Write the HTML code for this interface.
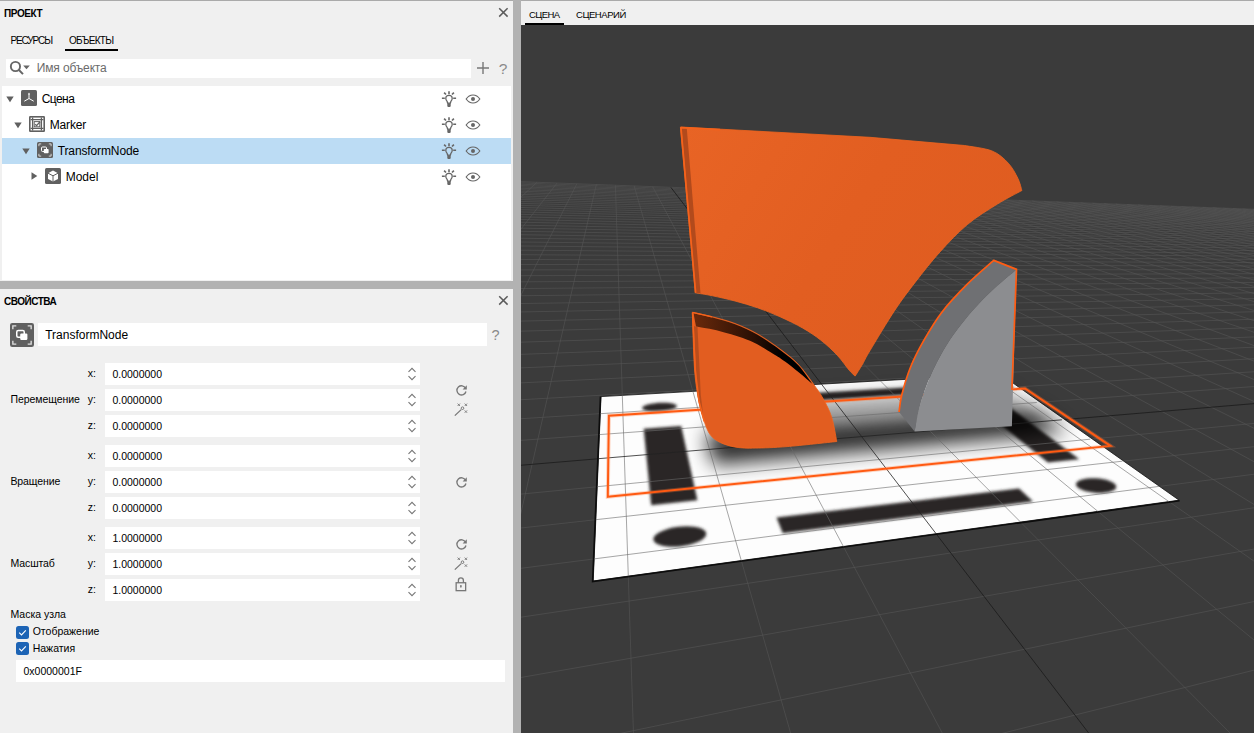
<!DOCTYPE html>
<html><head><meta charset="utf-8"><style>
html,body{margin:0;padding:0;}
body{width:1254px;height:733px;position:relative;overflow:hidden;background:#f0f0f0;font-family:"Liberation Sans",sans-serif;}
.t{position:absolute;white-space:nowrap;}
.r{position:absolute;display:block;}
</style></head><body>
<div class="r" style="left:0px;top:0px;width:513px;height:733px;background:#f0f0f0;"></div><div class="r" style="left:513px;top:0px;width:8px;height:733px;background:#b2b2b2;"></div><div class="r" style="left:0px;top:0px;width:513px;height:1px;background:#aaaaaa;"></div><div class="r" style="left:521px;top:0px;width:733px;height:1px;background:#aaaaaa;"></div><div class="r" style="left:0px;top:281px;width:513px;height:8px;background:#b2b2b2;"></div><div class="t" style="left:4.00px;top:8.54px;font-size:10px;line-height:10px;color:#000;font-weight:bold;letter-spacing:-0.4px;">ПРОЕКТ</div><svg class="r" style="left:498px;top:7px;" width="11" height="11" viewBox="0 0 11 11"><path d="M1.2 1.2L9.6 9.6M9.6 1.2L1.2 9.6" stroke="#5c5c5c" stroke-width="1.5" fill="none"/></svg><div class="t" style="left:10.40px;top:35.73px;font-size:10px;line-height:10px;color:#000;font-weight:normal;letter-spacing:-1.1px;">РЕСУРСЫ</div><div class="t" style="left:68.90px;top:35.73px;font-size:10px;line-height:10px;color:#000;font-weight:normal;letter-spacing:-0.7px;">ОБЪЕКТЫ</div><div class="r" style="left:65px;top:49px;width:53px;height:2px;background:#000;"></div><div class="r" style="left:6px;top:59px;width:465px;height:19px;background:#fff;"></div><svg class="r" style="left:9px;top:60px;" width="22" height="16" viewBox="0 0 22 16"><circle cx="6.45" cy="6.5" r="4.6" stroke="#666" stroke-width="1.9" fill="none"/><path d="M9.7 9.8L14 14.1" stroke="#666" stroke-width="2"/><path d="M14.2 5.6h6.6l-3.3 3.7z" fill="#666"/></svg><div class="t" style="left:36.80px;top:62.24px;font-size:12px;line-height:12px;color:#6b6b6b;font-weight:normal;letter-spacing:-0.15px;">Имя объекта</div><svg class="r" style="left:476px;top:61px;" width="14" height="14" viewBox="0 0 14 14"><path d="M7 1V13M1 7H13" stroke="#777" stroke-width="1.4"/></svg><div class="t" style="left:498.80px;top:60.98px;font-size:15.5px;line-height:15.5px;color:#8a8a8a;font-weight:normal;letter-spacing:0px;">?</div><div class="r" style="left:2px;top:86px;width:509px;height:194px;background:#fff;"></div><div class="r" style="left:2px;top:138px;width:509px;height:26px;background:#bcdcf4;"></div><svg class="r" style="left:6px;top:96px;" width="8" height="7" viewBox="0 0 8 7"><path d="M0.3 0.5H7.7L4 6.3Z" fill="#606060"/></svg><svg class="r" style="left:21px;top:90px;" width="16" height="16" viewBox="0 0 16 16"><rect x="0" y="0" width="16" height="16" rx="1.5" fill="#606060"/><path d="M8 3.5V8.5M8 8.5L3.3 11.2M8 8.5L12.7 11.2" stroke="#fff" stroke-width="1" fill="none"/><path d="M8 2.6l1 1.8h-2z" fill="#fff"/></svg><div class="t" style="left:41.70px;top:92.54px;font-size:12px;line-height:12px;color:#000;font-weight:normal;letter-spacing:-0.55px;">Сцена</div><svg class="r" style="left:441px;top:90px;" width="16" height="18" viewBox="0 0 16 18"><path d="M8 1.2V4.3M3.1 2.6L5 4.5M12.9 2.6L11 4.5M0.9 8.2H3.8M12.2 8.2H15.1" stroke="#666" stroke-width="1.6"/><path d="M8 5.3c-1.9 0-3.2 1.4-3.2 3.1 0 1.2.6 2 1.3 2.9l.5 1.8h2.8l.5-1.8c.7-.9 1.3-1.7 1.3-2.9 0-1.7-1.3-3.1-3.2-3.1z" fill="none" stroke="#666" stroke-width="1.3"/><path d="M6.3 13.3h3.4v2.6c0 .7-.7 1.2-1.7 1.2s-1.7-.5-1.7-1.2z" fill="#666"/></svg><svg class="r" style="left:465px;top:94px;" width="16" height="10" viewBox="0 0 16 10"><path d="M1.2 5C3 2.3 5.3 1 8 1s5 1.3 6.8 4c-1.8 2.7-4.1 4-6.8 4S3 7.7 1.2 5z" fill="none" stroke="#666" stroke-width="1.2"/><circle cx="8" cy="5" r="2" fill="#666"/></svg><svg class="r" style="left:14px;top:122px;" width="8" height="7" viewBox="0 0 8 7"><path d="M0.3 0.5H7.7L4 6.3Z" fill="#606060"/></svg><svg class="r" style="left:29px;top:116px;" width="16" height="16" viewBox="0 0 16 16"><rect x="0" y="0" width="16" height="16" rx="1.2" fill="#606060"/><rect x="1.6" y="1.6" width="12.8" height="12.8" fill="#fff"/><path d="M1.6 3.6H14.4M1.6 12.4H14.4M3.6 1.6V14.4M12.4 1.6V14.4" stroke="#606060" stroke-width="1.3"/><rect x="5.2" y="5.6" width="5.6" height="5.2" fill="none" stroke="#606060" stroke-width="1"/><path d="M6.2 8.2l1.4 1.4 3.4-3.8" stroke="#606060" stroke-width="1.3" fill="none"/></svg><div class="t" style="left:49.70px;top:118.54px;font-size:12px;line-height:12px;color:#000;font-weight:normal;letter-spacing:-0.15px;">Marker</div><svg class="r" style="left:441px;top:116px;" width="16" height="18" viewBox="0 0 16 18"><path d="M8 1.2V4.3M3.1 2.6L5 4.5M12.9 2.6L11 4.5M0.9 8.2H3.8M12.2 8.2H15.1" stroke="#666" stroke-width="1.6"/><path d="M8 5.3c-1.9 0-3.2 1.4-3.2 3.1 0 1.2.6 2 1.3 2.9l.5 1.8h2.8l.5-1.8c.7-.9 1.3-1.7 1.3-2.9 0-1.7-1.3-3.1-3.2-3.1z" fill="none" stroke="#666" stroke-width="1.3"/><path d="M6.3 13.3h3.4v2.6c0 .7-.7 1.2-1.7 1.2s-1.7-.5-1.7-1.2z" fill="#666"/></svg><svg class="r" style="left:465px;top:120px;" width="16" height="10" viewBox="0 0 16 10"><path d="M1.2 5C3 2.3 5.3 1 8 1s5 1.3 6.8 4c-1.8 2.7-4.1 4-6.8 4S3 7.7 1.2 5z" fill="none" stroke="#666" stroke-width="1.2"/><circle cx="8" cy="5" r="2" fill="#666"/></svg><svg class="r" style="left:22px;top:148px;" width="8" height="7" viewBox="0 0 8 7"><path d="M0.3 0.5H7.7L4 6.3Z" fill="#606060"/></svg><svg class="r" style="left:37px;top:142px;" width="16" height="16" viewBox="0 0 16 16"><rect x="0" y="0" width="16" height="16" rx="1.5" fill="#606060"/><path d="M1.9 4.2V1.9H4.2M11.8 1.9H14.1V4.2M14.1 11.8V14.1H11.8M4.2 14.1H1.9V11.8" stroke="#fff" stroke-width="0.9" fill="none" opacity="0.8"/><rect x="4.5" y="5" width="5" height="4.5" rx="1" fill="none" stroke="#fff" stroke-width="1"/><rect x="6.8" y="7" width="4.8" height="4.3" rx="0.8" fill="#fff"/></svg><div class="t" style="left:57.70px;top:144.54px;font-size:12px;line-height:12px;color:#000;font-weight:normal;letter-spacing:-0.12px;">TransformNode</div><svg class="r" style="left:441px;top:142px;" width="16" height="18" viewBox="0 0 16 18"><path d="M8 1.2V4.3M3.1 2.6L5 4.5M12.9 2.6L11 4.5M0.9 8.2H3.8M12.2 8.2H15.1" stroke="#666" stroke-width="1.6"/><path d="M8 5.3c-1.9 0-3.2 1.4-3.2 3.1 0 1.2.6 2 1.3 2.9l.5 1.8h2.8l.5-1.8c.7-.9 1.3-1.7 1.3-2.9 0-1.7-1.3-3.1-3.2-3.1z" fill="none" stroke="#666" stroke-width="1.3"/><path d="M6.3 13.3h3.4v2.6c0 .7-.7 1.2-1.7 1.2s-1.7-.5-1.7-1.2z" fill="#666"/></svg><svg class="r" style="left:465px;top:146px;" width="16" height="10" viewBox="0 0 16 10"><path d="M1.2 5C3 2.3 5.3 1 8 1s5 1.3 6.8 4c-1.8 2.7-4.1 4-6.8 4S3 7.7 1.2 5z" fill="none" stroke="#666" stroke-width="1.2"/><circle cx="8" cy="5" r="2" fill="#666"/></svg><svg class="r" style="left:30.5px;top:172px;" width="7" height="8" viewBox="0 0 7 8"><path d="M0.5 0.3V7.7L6.3 4Z" fill="#606060"/></svg><svg class="r" style="left:45px;top:168px;" width="16" height="16" viewBox="0 0 16 16"><rect x="0" y="0" width="16" height="16" rx="1.5" fill="#606060"/><path d="M8 2.6L13 5.2V11L8 13.6L3 11V5.2Z" fill="#fff"/><path d="M3 5.2L8 7.8L13 5.2M8 7.8V13.6" stroke="#606060" stroke-width="1" fill="none"/></svg><div class="t" style="left:65.70px;top:170.54px;font-size:12px;line-height:12px;color:#000;font-weight:normal;letter-spacing:0px;">Model</div><svg class="r" style="left:441px;top:168px;" width="16" height="18" viewBox="0 0 16 18"><path d="M8 1.2V4.3M3.1 2.6L5 4.5M12.9 2.6L11 4.5M0.9 8.2H3.8M12.2 8.2H15.1" stroke="#666" stroke-width="1.6"/><path d="M8 5.3c-1.9 0-3.2 1.4-3.2 3.1 0 1.2.6 2 1.3 2.9l.5 1.8h2.8l.5-1.8c.7-.9 1.3-1.7 1.3-2.9 0-1.7-1.3-3.1-3.2-3.1z" fill="none" stroke="#666" stroke-width="1.3"/><path d="M6.3 13.3h3.4v2.6c0 .7-.7 1.2-1.7 1.2s-1.7-.5-1.7-1.2z" fill="#666"/></svg><svg class="r" style="left:465px;top:172px;" width="16" height="10" viewBox="0 0 16 10"><path d="M1.2 5C3 2.3 5.3 1 8 1s5 1.3 6.8 4c-1.8 2.7-4.1 4-6.8 4S3 7.7 1.2 5z" fill="none" stroke="#666" stroke-width="1.2"/><circle cx="8" cy="5" r="2" fill="#666"/></svg><div class="t" style="left:4.00px;top:296.64px;font-size:10px;line-height:10px;color:#000;font-weight:bold;letter-spacing:-0.5px;">СВОЙСТВА</div><svg class="r" style="left:498px;top:295px;" width="11" height="11" viewBox="0 0 11 11"><path d="M1.2 1.2L9.6 9.6M9.6 1.2L1.2 9.6" stroke="#5c5c5c" stroke-width="1.5" fill="none"/></svg><svg class="r" style="left:10px;top:323px;" width="24" height="24" viewBox="0 0 24 24"><g transform="scale(1.5)"><rect x="0" y="0" width="16" height="16" rx="1.5" fill="#606060"/><path d="M1.9 4.2V1.9H4.2M11.8 1.9H14.1V4.2M14.1 11.8V14.1H11.8M4.2 14.1H1.9V11.8" stroke="#fff" stroke-width="0.9" fill="none" opacity="0.8"/><rect x="4.5" y="5" width="5" height="4.5" rx="1" fill="none" stroke="#fff" stroke-width="1"/><rect x="6.8" y="7" width="4.8" height="4.3" rx="0.8" fill="#fff"/></g></svg><div class="r" style="left:38px;top:323px;width:449px;height:23px;background:#fff;"></div><div class="t" style="left:45.20px;top:328.94px;font-size:12px;line-height:12px;color:#000;font-weight:normal;letter-spacing:0px;">TransformNode</div><div class="t" style="left:491.50px;top:328.33px;font-size:14.5px;line-height:14.5px;color:#8a8a8a;font-weight:normal;letter-spacing:0px;">?</div><div class="r" style="left:105px;top:363px;width:315px;height:22px;background:#fff;"></div><div class="t" style="left:87.70px;top:368.41px;font-size:10.5px;line-height:10.5px;color:#000;font-weight:normal;letter-spacing:0px;">x:</div><div class="t" style="left:112.40px;top:368.61px;font-size:10.5px;line-height:10.5px;color:#000;font-weight:normal;letter-spacing:0px;">0.0000000</div><svg class="r" style="left:407px;top:366px;" width="10" height="16" viewBox="0 0 10 16"><path d="M1.5 5.8L5 2.3L8.5 5.8M1.5 10.2L5 13.7L8.5 10.2" stroke="#777" stroke-width="1.1" fill="none"/></svg><div class="r" style="left:105px;top:389px;width:315px;height:22px;background:#fff;"></div><div class="t" style="left:87.70px;top:394.41px;font-size:10.5px;line-height:10.5px;color:#000;font-weight:normal;letter-spacing:0px;">y:</div><div class="t" style="left:112.40px;top:394.61px;font-size:10.5px;line-height:10.5px;color:#000;font-weight:normal;letter-spacing:0px;">0.0000000</div><svg class="r" style="left:407px;top:392px;" width="10" height="16" viewBox="0 0 10 16"><path d="M1.5 5.8L5 2.3L8.5 5.8M1.5 10.2L5 13.7L8.5 10.2" stroke="#777" stroke-width="1.1" fill="none"/></svg><div class="r" style="left:105px;top:415px;width:315px;height:22px;background:#fff;"></div><div class="t" style="left:87.70px;top:420.41px;font-size:10.5px;line-height:10.5px;color:#000;font-weight:normal;letter-spacing:0px;">z:</div><div class="t" style="left:112.40px;top:420.61px;font-size:10.5px;line-height:10.5px;color:#000;font-weight:normal;letter-spacing:0px;">0.0000000</div><svg class="r" style="left:407px;top:418px;" width="10" height="16" viewBox="0 0 10 16"><path d="M1.5 5.8L5 2.3L8.5 5.8M1.5 10.2L5 13.7L8.5 10.2" stroke="#777" stroke-width="1.1" fill="none"/></svg><div class="r" style="left:105px;top:445px;width:315px;height:22px;background:#fff;"></div><div class="t" style="left:87.70px;top:450.41px;font-size:10.5px;line-height:10.5px;color:#000;font-weight:normal;letter-spacing:0px;">x:</div><div class="t" style="left:112.40px;top:450.61px;font-size:10.5px;line-height:10.5px;color:#000;font-weight:normal;letter-spacing:0px;">0.0000000</div><svg class="r" style="left:407px;top:448px;" width="10" height="16" viewBox="0 0 10 16"><path d="M1.5 5.8L5 2.3L8.5 5.8M1.5 10.2L5 13.7L8.5 10.2" stroke="#777" stroke-width="1.1" fill="none"/></svg><div class="r" style="left:105px;top:471px;width:315px;height:22px;background:#fff;"></div><div class="t" style="left:87.70px;top:476.41px;font-size:10.5px;line-height:10.5px;color:#000;font-weight:normal;letter-spacing:0px;">y:</div><div class="t" style="left:112.40px;top:476.61px;font-size:10.5px;line-height:10.5px;color:#000;font-weight:normal;letter-spacing:0px;">0.0000000</div><svg class="r" style="left:407px;top:474px;" width="10" height="16" viewBox="0 0 10 16"><path d="M1.5 5.8L5 2.3L8.5 5.8M1.5 10.2L5 13.7L8.5 10.2" stroke="#777" stroke-width="1.1" fill="none"/></svg><div class="r" style="left:105px;top:497px;width:315px;height:22px;background:#fff;"></div><div class="t" style="left:87.70px;top:502.41px;font-size:10.5px;line-height:10.5px;color:#000;font-weight:normal;letter-spacing:0px;">z:</div><div class="t" style="left:112.40px;top:502.61px;font-size:10.5px;line-height:10.5px;color:#000;font-weight:normal;letter-spacing:0px;">0.0000000</div><svg class="r" style="left:407px;top:500px;" width="10" height="16" viewBox="0 0 10 16"><path d="M1.5 5.8L5 2.3L8.5 5.8M1.5 10.2L5 13.7L8.5 10.2" stroke="#777" stroke-width="1.1" fill="none"/></svg><div class="r" style="left:105px;top:527px;width:315px;height:22px;background:#fff;"></div><div class="t" style="left:87.70px;top:532.41px;font-size:10.5px;line-height:10.5px;color:#000;font-weight:normal;letter-spacing:0px;">x:</div><div class="t" style="left:112.40px;top:532.61px;font-size:10.5px;line-height:10.5px;color:#000;font-weight:normal;letter-spacing:0px;">1.0000000</div><svg class="r" style="left:407px;top:530px;" width="10" height="16" viewBox="0 0 10 16"><path d="M1.5 5.8L5 2.3L8.5 5.8M1.5 10.2L5 13.7L8.5 10.2" stroke="#777" stroke-width="1.1" fill="none"/></svg><div class="r" style="left:105px;top:553px;width:315px;height:22px;background:#fff;"></div><div class="t" style="left:87.70px;top:558.41px;font-size:10.5px;line-height:10.5px;color:#000;font-weight:normal;letter-spacing:0px;">y:</div><div class="t" style="left:112.40px;top:558.61px;font-size:10.5px;line-height:10.5px;color:#000;font-weight:normal;letter-spacing:0px;">1.0000000</div><svg class="r" style="left:407px;top:556px;" width="10" height="16" viewBox="0 0 10 16"><path d="M1.5 5.8L5 2.3L8.5 5.8M1.5 10.2L5 13.7L8.5 10.2" stroke="#777" stroke-width="1.1" fill="none"/></svg><div class="r" style="left:105px;top:579px;width:315px;height:22px;background:#fff;"></div><div class="t" style="left:87.70px;top:584.41px;font-size:10.5px;line-height:10.5px;color:#000;font-weight:normal;letter-spacing:0px;">z:</div><div class="t" style="left:112.40px;top:584.61px;font-size:10.5px;line-height:10.5px;color:#000;font-weight:normal;letter-spacing:0px;">1.0000000</div><svg class="r" style="left:407px;top:582px;" width="10" height="16" viewBox="0 0 10 16"><path d="M1.5 5.8L5 2.3L8.5 5.8M1.5 10.2L5 13.7L8.5 10.2" stroke="#777" stroke-width="1.1" fill="none"/></svg><div class="t" style="left:10.40px;top:394.41px;font-size:10.5px;line-height:10.5px;color:#000;font-weight:normal;letter-spacing:-0.05px;">Перемещение</div><div class="t" style="left:10.40px;top:476.41px;font-size:10.5px;line-height:10.5px;color:#000;font-weight:normal;letter-spacing:-0.1px;">Вращение</div><div class="t" style="left:10.50px;top:558.41px;font-size:10.5px;line-height:10.5px;color:#000;font-weight:normal;letter-spacing:-0.1px;">Масштаб</div><svg class="r" style="left:455px;top:384px;" width="13" height="13" viewBox="0 0 13 13"><path d="M10.6 4.2A4.6 4.6 0 1 0 11 7.5" stroke="#777" stroke-width="1.3" fill="none"/><path d="M11.8 1.2V5.4H7.6Z" fill="#777"/></svg><svg class="r" style="left:454px;top:403px;" width="14" height="14" viewBox="0 0 14 14"><path d="M0.8 12.6L7.2 6.6" stroke="#777" stroke-width="1.3"/><circle cx="8.5" cy="5.2" r="1.3" fill="none" stroke="#777" stroke-width="1"/><path d="M3.5999999999999996 0.6000000000000001l2.4 2.4M6.0 0.6000000000000001l-2.4 2.4M10.700000000000001 0.6000000000000001l2.4 2.4M13.1 0.6000000000000001l-2.4 2.4M10.700000000000001 7.3999999999999995l2.4 2.4M13.1 7.3999999999999995l-2.4 2.4" stroke="#777" stroke-width="0.9"/></svg><svg class="r" style="left:455px;top:476px;" width="13" height="13" viewBox="0 0 13 13"><path d="M10.6 4.2A4.6 4.6 0 1 0 11 7.5" stroke="#777" stroke-width="1.3" fill="none"/><path d="M11.8 1.2V5.4H7.6Z" fill="#777"/></svg><svg class="r" style="left:455px;top:538px;" width="13" height="13" viewBox="0 0 13 13"><path d="M10.6 4.2A4.6 4.6 0 1 0 11 7.5" stroke="#777" stroke-width="1.3" fill="none"/><path d="M11.8 1.2V5.4H7.6Z" fill="#777"/></svg><svg class="r" style="left:454px;top:557px;" width="14" height="14" viewBox="0 0 14 14"><path d="M0.8 12.6L7.2 6.6" stroke="#777" stroke-width="1.3"/><circle cx="8.5" cy="5.2" r="1.3" fill="none" stroke="#777" stroke-width="1"/><path d="M3.5999999999999996 0.6000000000000001l2.4 2.4M6.0 0.6000000000000001l-2.4 2.4M10.700000000000001 0.6000000000000001l2.4 2.4M13.1 0.6000000000000001l-2.4 2.4M10.700000000000001 7.3999999999999995l2.4 2.4M13.1 7.3999999999999995l-2.4 2.4" stroke="#777" stroke-width="0.9"/></svg><svg class="r" style="left:454px;top:577px;" width="14" height="15" viewBox="0 0 14 15"><path d="M4.4 5.8V3.4a2.5 2.5 0 0 1 5 0V5.8" stroke="#777" stroke-width="1.3" fill="none"/><rect x="2.15" y="5.75" width="9.5" height="7.9" fill="none" stroke="#777" stroke-width="1.3"/><circle cx="6.9" cy="9" r="0.9" fill="#777"/><rect x="6.5" y="9" width="0.8" height="1.9" fill="#777"/></svg><div class="t" style="left:10.50px;top:609.11px;font-size:10.5px;line-height:10.5px;color:#000;font-weight:normal;letter-spacing:0px;">Маска узла</div><svg class="r" style="left:16px;top:625.5px;" width="13" height="13" viewBox="0 0 13 13"><rect x="0" y="0" width="13" height="13" rx="2.5" fill="#1d64b5"/><path d="M3.2 6.6L5.5 8.9L9.8 4.3" stroke="#fff" stroke-width="1.1" fill="none"/></svg><div class="t" style="left:32.70px;top:626.31px;font-size:10.5px;line-height:10.5px;color:#000;font-weight:normal;letter-spacing:0px;">Отображение</div><svg class="r" style="left:16px;top:641.5px;" width="13" height="13" viewBox="0 0 13 13"><rect x="0" y="0" width="13" height="13" rx="2.5" fill="#1d64b5"/><path d="M3.2 6.6L5.5 8.9L9.8 4.3" stroke="#fff" stroke-width="1.1" fill="none"/></svg><div class="t" style="left:32.70px;top:642.61px;font-size:10.5px;line-height:10.5px;color:#000;font-weight:normal;letter-spacing:0px;">Нажатия</div><div class="r" style="left:16px;top:660px;width:489px;height:22px;background:#fff;"></div><div class="t" style="left:23.50px;top:666.41px;font-size:10.5px;line-height:10.5px;color:#000;font-weight:normal;letter-spacing:0px;">0x0000001F</div><div class="r" style="left:521px;top:1px;width:733px;height:24px;background:#f0f0f0;"></div><div class="t" style="left:529.00px;top:9.66px;font-size:9.5px;line-height:9.5px;color:#000;font-weight:normal;letter-spacing:-0.6px;">СЦЕНА</div><div class="t" style="left:576.00px;top:9.66px;font-size:9.5px;line-height:9.5px;color:#000;font-weight:normal;letter-spacing:-0.45px;">СЦЕНАРИЙ</div><div class="r" style="left:525px;top:23px;width:39px;height:2px;background:#000;"></div><div class="r" style="left:521px;top:25px;width:733px;height:708px;background:#3b3b3b;"></div><svg class="r" style="left:521px;top:25px" width="733" height="708" viewBox="521 25 733 708"><defs><clipPath id="vp"><rect x="521" y="25" width="733" height="708"/></clipPath><filter id="b1" x="-20%" y="-20%" width="140%" height="140%"><feGaussianBlur stdDeviation="1.4"/></filter><filter id="b8" x="-50%" y="-50%" width="200%" height="200%"><feGaussianBlur stdDeviation="10"/></filter><filter id="b4" x="-50%" y="-50%" width="200%" height="200%"><feGaussianBlur stdDeviation="4"/></filter><filter id="glow" x="-10%" y="-10%" width="120%" height="120%"><feGaussianBlur stdDeviation="0.6"/></filter></defs><g clip-path="url(#vp)"><path d="M-38854.6 586.0L-866.1 129.5M-38012.6 645.3L-814.4 131.5M-37170.6 704.6L-764.1 133.4M-36328.6 763.9L-715.2 135.2M-35486.5 823.3L-667.6 137.0M-34644.5 882.6L-621.3 138.7M-33802.5 941.9L-576.1 140.4M-32960.5 1001.2L-532.2 142.1M-32118.4 1060.5L-489.3 143.7M-31276.4 1119.8L-447.5 145.3M-30434.4 1179.1L-406.7 146.8M-29592.4 1238.4L-367.0 148.3M-28750.3 1297.7L-328.2 149.8M-27908.3 1357.0L-290.3 151.2M-27066.3 1416.3L-253.3 152.6M-26224.3 1475.6L-217.2 153.9M-25382.3 1534.9L-181.9 155.3M-24540.2 1594.2L-147.4 156.6M-23698.2 1653.5L-113.7 157.8M-22856.2 1712.9L-80.7 159.1M-22014.2 1772.2L-48.4 160.3M-21172.1 1831.5L-16.9 161.5M-20330.1 1890.8L14.0 162.6M-19488.1 1950.1L44.2 163.8M-18646.1 2009.4L73.7 164.9M-17804.0 2068.7L102.7 166.0M-16962.0 2128.0L131.0 167.0M-16120.0 2187.3L158.8 168.1M-15278.0 2246.6L186.0 169.1M-14435.9 2305.9L212.7 170.1M-13593.9 2365.2L238.8 171.1M-12751.9 2424.5L264.5 172.1M-11909.9 2483.8L289.6 173.0M-11067.9 2543.2L314.2 173.9M-10225.8 2602.5L338.4 174.8M-9383.8 2661.8L362.1 175.7M-8541.8 2721.1L385.4 176.6M-7699.8 2780.4L408.3 177.5M-6857.7 2839.7L430.7 178.3M-6015.7 2899.0L452.7 179.1M-5173.7 2958.3L474.3 180.0M-4331.7 3017.6L495.6 180.8M-3489.6 3076.9L516.4 181.5M-2647.6 3136.2L536.9 182.3M-1805.6 3195.5L557.0 183.1M-963.6 3254.8L576.8 183.8M-121.6 3314.1L596.3 184.5M720.5 3373.4L615.4 185.3M1562.5 3432.8L634.2 186.0M2190.8 3088.9L652.7 186.7M2453.9 1965.0L688.7 188.0M2519.8 1683.2L706.3 188.7M2567.0 1481.7L723.6 189.3M2602.4 1330.5L740.7 190.0M2629.9 1212.8L757.4 190.6M2651.9 1118.7L773.9 191.2M2670.0 1041.6L790.2 191.8M2685.0 977.3L806.1 192.4M2697.8 922.9L821.9 193.0M2708.7 876.3L837.4 193.6M2718.1 835.9L852.6 194.2M2726.4 800.5L867.7 194.8M2733.7 769.3L882.5 195.3M2740.2 741.6L897.1 195.9M2746.0 716.7L911.4 196.4M2751.2 694.4L925.6 196.9M2756.0 674.2L939.6 197.5M2760.3 655.8L953.3 198.0M2764.2 639.0L966.9 198.5M2767.8 623.6L980.2 199.0M2771.1 609.4L993.4 199.5M2774.2 596.4L1006.4 200.0M2777.0 584.3L1019.2 200.5M2779.6 573.0L1031.9 200.9M2782.1 562.6L1044.3 201.4M2784.4 552.8L1056.6 201.9M2786.5 543.7L1068.8 202.3M2788.5 535.1L1080.7 202.8M2790.4 527.0L1092.5 203.2M2792.2 519.5L1104.2 203.7M2793.8 512.3L1115.7 204.1M2795.4 505.6L1127.0 204.5M2796.9 499.2L1138.2 204.9M2798.3 493.2L1149.3 205.4M2799.7 487.4L1160.2 205.8M2800.9 482.0L1171.0 206.2M2802.2 476.8L1181.6 206.6M2803.3 471.8L1192.1 207.0M2804.4 467.1L1202.5 207.4M2805.5 462.6L1212.7 207.7M2806.5 458.4L1222.8 208.1M2807.4 454.2L1232.8 208.5M2808.4 450.3L1242.7 208.9M2809.2 446.5L1252.5 209.2M2810.1 442.9L1262.1 209.6M2810.9 439.5L1271.6 210.0M2811.7 436.1L1281.0 210.3M2812.4 432.9L1290.3 210.7M2813.1 429.8L1299.5 211.0M2813.8 426.9L1308.6 211.3M2101.5 3470.7L2813.8 426.9M539.1 3360.7L2740.8 416.4M-1023.3 3250.6L2672.4 406.6M-2585.7 3140.6L2608.2 397.4M-4148.0 3030.5L2548.0 388.8M-5710.4 2920.5L2491.2 380.7M-7272.8 2810.4L2437.8 373.0M-8835.2 2700.4L2387.2 365.8M-10397.6 2590.4L2339.4 358.9M-11960.0 2480.3L2294.1 352.5M-13522.4 2370.3L2251.1 346.3M-15084.7 2260.2L2210.3 340.5M-16647.1 2150.2L2171.4 334.9M-19771.9 1930.1L2099.1 324.5M-21334.3 1820.0L2065.5 319.7M-22896.7 1710.0L2033.3 315.1M-24459.0 1600.0L2002.5 310.7M-26021.4 1489.9L1973.0 306.5M-27583.8 1379.9L1944.7 302.4M-29146.2 1269.8L1917.6 298.5M-30708.6 1159.8L1891.5 294.8M-32271.0 1049.7L1866.5 291.2M-33833.4 939.7L1842.5 287.8M-35395.7 829.6L1819.3 284.5M-36958.1 719.6L1797.0 281.3M-38520.5 609.6L1775.5 278.2M-24868.2 418.0L1754.8 275.2M-16950.9 322.8L1734.8 272.4M-12787.2 272.8L1715.5 269.6M-10219.4 241.9L1696.9 266.9M-8477.4 221.0L1678.8 264.4M-7218.0 205.9L1661.4 261.9M-6265.2 194.4L1644.5 259.4M-5519.0 185.4L1628.2 257.1M-4918.9 178.2L1612.3 254.8M-4425.8 172.3L1597.0 252.6M-4013.4 167.3L1582.1 250.5M-3663.4 163.1L1567.7 248.4M-3362.7 159.5L1553.7 246.4M-3101.4 156.4L1540.0 244.5M-2872.4 153.6L1526.8 242.6M-2670.0 151.2L1514.0 240.8M-2489.8 149.0L1501.5 239.0M-2328.3 147.1L1489.3 237.2M-2182.9 145.4L1477.5 235.5M-2051.1 143.8L1466.0 233.9M-1931.2 142.3L1454.8 232.3M-1821.6 141.0L1443.9 230.7M-1721.1 139.8L1433.2 229.2M-1628.5 138.7L1422.9 227.7M-1543.0 137.7L1412.8 226.3M-1463.8 136.7L1402.9 224.9M-1390.2 135.8L1393.3 223.5M-1321.7 135.0L1383.9 222.1M-1257.7 134.2L1374.7 220.8M-1197.7 133.5L1365.8 219.5M-1141.5 132.8L1357.0 218.3M-1088.7 132.2L1348.5 217.1M-1039.0 131.6L1340.1 215.9M-992.1 131.0L1332.0 214.7M-947.8 130.5L1324.0 213.6M-905.8 130.0L1316.2 212.4M-866.1 129.5L1308.6 211.3" stroke="#555" stroke-width="0.6" fill="none"/><path d="M2355.1 2387.1L670.9 187.4M-18209.5 2040.1L2134.4 329.6" stroke="#1e1e1e" stroke-width="0.9" fill="none"/><polygon points="593.2,581.0 1179.1,500.2 1000.2,374.0 601.0,396.6" fill="#fdfdfd" stroke="#151515" stroke-width="0.8"/><polyline points="600.5,396.6 592.6,581.6 1179.6,500.8" fill="none" stroke="#0c0c0c" stroke-width="1.6" stroke-linejoin="miter"/><g filter="url(#b1)"><polygon points="651.2,505.2 697.4,500.2 681.2,426.0 643.7,428.7" fill="#2a2826"/><polygon points="1047.9,462.6 1079.3,459.3 1003.4,402.7 976.0,404.7" fill="#2a2826"/><polygon points="782.8,533.3 1033.0,501.4 1019.0,488.5 776.5,517.5" fill="#2a2826"/><polygon points="731.6,406.2 917.4,394.2 910.0,387.3 728.5,398.3" fill="#2a2826"/><polygon points="676.9,405.9 676.5,405.3 675.8,404.7 674.6,404.2 673.1,403.7 671.3,403.3 669.2,403.0 666.8,402.8 664.3,402.7 661.7,402.7 659.0,402.8 656.3,403.0 653.7,403.4 651.2,403.8 649.0,404.2 646.9,404.8 645.2,405.4 643.8,406.1 642.9,406.7 642.3,407.4 642.1,408.1 642.4,408.8 643.1,409.4 644.3,410.0 645.8,410.5 647.6,410.9 649.8,411.2 652.2,411.4 654.8,411.5 657.6,411.5 660.3,411.3 663.1,411.1 665.7,410.8 668.2,410.3 670.5,409.8 672.5,409.3 674.1,408.6 675.4,408.0 676.3,407.3 676.8,406.6" fill="#2a2826"/><polygon points="706.1,533.1 705.5,531.6 704.2,530.3 702.4,529.1 700.0,528.1 697.2,527.3 694.0,526.7 690.4,526.4 686.6,526.3 682.6,526.4 678.6,526.7 674.5,527.3 670.6,528.1 666.9,529.2 663.5,530.4 660.5,531.7 657.9,533.2 655.9,534.7 654.4,536.3 653.6,538.0 653.4,539.6 653.9,541.1 655.0,542.5 656.8,543.7 659.2,544.8 662.1,545.7 665.5,546.3 669.2,546.7 673.2,546.8 677.4,546.7 681.6,546.3 685.8,545.6 689.9,544.7 693.6,543.6 697.0,542.3 699.9,540.9 702.4,539.4 704.2,537.8 705.5,536.2 706.1,534.6" fill="#2a2826"/><polygon points="1113.9,483.2 1112.2,482.2 1110.1,481.2 1107.7,480.3 1105.1,479.6 1102.2,479.0 1099.2,478.6 1096.1,478.3 1093.0,478.2 1090.0,478.2 1087.2,478.5 1084.5,478.9 1082.1,479.5 1080.0,480.2 1078.4,481.0 1077.1,482.0 1076.3,483.1 1076.0,484.2 1076.2,485.3 1076.9,486.5 1078.0,487.7 1079.7,488.8 1081.7,489.8 1084.1,490.7 1086.8,491.5 1089.8,492.1 1092.9,492.6 1096.2,492.9 1099.4,493.0 1102.5,492.9 1105.5,492.6 1108.2,492.2 1110.6,491.6 1112.6,490.8 1114.2,489.9 1115.4,488.9 1116.1,487.8 1116.2,486.7 1115.9,485.5 1115.1,484.4" fill="#2a2826"/><polygon points="982.6,386.7 981.7,386.2 980.5,385.7 979.0,385.2 977.4,384.8 975.5,384.5 973.5,384.2 971.4,384.1 969.3,384.0 967.1,384.0 965.0,384.0 963.1,384.2 961.2,384.4 959.6,384.8 958.2,385.2 957.1,385.6 956.3,386.1 955.8,386.7 955.7,387.2 955.9,387.8 956.4,388.4 957.3,388.9 958.4,389.5 959.9,389.9 961.6,390.3 963.5,390.7 965.6,391.0 967.7,391.1 969.9,391.2 972.1,391.2 974.2,391.2 976.3,391.0 978.1,390.7 979.7,390.4 981.1,390.0 982.1,389.5 982.9,389.0 983.3,388.4 983.4,387.9 983.2,387.3" fill="#2a2826"/></g><polygon points="713.8,464.4 1066.7,432.2 1032.9,408.3 704.9,433.4" fill="#000" opacity="0.85" filter="url(#b8)"/><polygon points="743.3,430.5 1030.1,408.6 1001.1,388.0 733.0,405.1" fill="#000" opacity="0.35" filter="url(#b8)"/><path d="M628.3 576.2L622.3 395.4M741.3 560.6L692.9 391.4M843.4 546.5L759.2 387.7M1020.5 522.0L880.3 380.8M1097.9 511.4L935.7 377.7M1168.9 501.6L988.1 374.7M594.1 558.9L1159.1 486.4M595.8 519.7L1122.4 461.2M597.2 486.7L1090.2 439.2M599.4 434.6L1036.8 402.5M600.3 413.7L1014.3 387.1" stroke="#6a6a6a" stroke-width="0.6" fill="none"/><path d="M936.1 533.7L821.5 384.2M598.4 458.7L1061.9 419.8" stroke="#222" stroke-width="0.8" fill="none"/><polygon points="607.8,496.8 1110.4,445.9 1025.0,388.5 608.9,415.7" fill="none" stroke="#ff7a40" stroke-width="4" opacity="0.3"/><polygon points="607.8,496.8 1110.4,445.9 1025.0,388.5 608.9,415.7" fill="none" stroke="#ff5a12" stroke-width="2"/><defs><linearGradient id="sailg" x1="680" y1="127" x2="1000" y2="330" gradientUnits="userSpaceOnUse"><stop offset="0" stop-color="#e86425"/><stop offset="0.5" stop-color="#e25e21"/><stop offset="1" stop-color="#df5c20"/></linearGradient></defs><path d="M680.4,127L870.0,137.3L964.6,145.5C969.1,146.4 984.6,148.0 991.9,150.9C999.2,153.8 1004.0,158.6 1008.3,163.2C1012.6,167.8 1015.5,173.6 1017.8,178.2C1020.1,182.8 1021.2,188.4 1021.9,190.5C1017.8,192.8 1006.4,198.4 997.3,204.1C988.2,209.8 976.8,216.6 967.3,224.6C957.8,232.6 948.6,242.4 940.0,251.9C931.4,261.4 923.0,272.2 915.5,281.9C908.0,291.6 902.6,298.6 895.0,310.0C887.4,321.4 875.4,341.6 870.0,350.6C864.6,359.6 865.1,359.9 862.6,364.1C860.1,368.4 856.4,374.1 855.1,376.1C854.1,375.1 852.1,373.6 849.1,370.1C846.1,366.6 841.9,360.1 837.1,355.1C832.4,350.1 826.4,344.5 820.6,340.0C814.9,335.5 809.4,331.9 802.6,328.0C795.9,324.1 787.6,320.2 780.1,316.8C772.6,313.4 765.1,310.4 757.6,307.8C750.1,305.2 742.5,303.0 735.0,301.0C727.5,299.0 719.1,297.2 712.5,295.8C705.9,294.4 698.2,293.3 695.3,292.8Z" fill="url(#sailg)" stroke="#f0641e" stroke-width="0.8"/><path d="M681.5,128 L686.8,128.6 L700.5,293.2 L696,292.8 Z" fill="#b24a1c"/><path d="M680.9,127.3 L695.6,292.6 M680.9,127.6 L720,129.7" stroke="#f5621b" stroke-width="1.7" fill="none"/><path d="M692.3,312.3C695.7,313.1 705.4,314.9 712.5,316.8C719.6,318.7 727.5,320.6 735.0,323.5C742.5,326.4 750.1,329.7 757.6,334.0C765.1,338.3 773.4,344.1 780.1,349.1C786.9,354.1 792.6,358.4 798.1,364.1C803.6,369.9 809.0,377.9 813.1,383.6C817.2,389.3 819.7,392.5 822.8,398.1C825.9,403.7 829.4,410.0 831.7,417.2C834.0,424.4 835.9,437.4 836.8,441.5C828.5,442.4 800.7,445.5 787.1,446.6C773.5,447.7 763.7,448.0 755.2,448.1C746.7,448.2 741.8,448.1 736.0,447.2C730.2,446.3 725.0,444.7 720.7,442.7C716.5,440.7 713.3,438.7 710.5,435.1C707.7,431.5 706.0,426.5 704.1,421.0C702.2,415.5 700.6,410.4 699.0,401.9C697.4,393.4 695.7,384.9 694.6,370.0C693.5,355.1 692.7,321.9 692.3,312.3Z" fill="#e25d20" stroke="#f0641e" stroke-width="0.8"/><defs><linearGradient id="cres" x1="692" y1="0" x2="805" y2="0" gradientUnits="userSpaceOnUse"><stop offset="0" stop-color="#6b2a0c"/><stop offset="0.55" stop-color="#2a0f04"/><stop offset="0.8" stop-color="#000"/><stop offset="1" stop-color="#000"/></linearGradient></defs><path d="M693.5,313.3C696.7,314.0 705.6,315.8 712.5,317.6C719.4,319.4 727.5,321.4 735.0,324.3C742.5,327.2 750.1,330.5 757.6,334.8C765.1,339.1 773.4,344.9 780.1,349.9C786.9,354.9 792.7,359.2 798.1,364.9C803.5,370.6 810.1,380.8 812.5,384.0C810.2,382.1 803.6,376.2 799.0,372.5C794.4,368.8 789.4,364.7 785.0,361.5C780.6,358.3 778.4,356.9 772.6,353.5C766.8,350.1 758.8,344.5 750.0,340.8C741.2,337.1 729.0,333.6 720.0,331.2C711.0,328.8 700.0,327.3 696.0,326.5Z" fill="url(#cres)"/><path d="M693.8,326 L697.5,327 L700.8,395 L703.5,418 L701,412 L697.5,396 Z" fill="#b24a1c" opacity="0.85"/><path d="M692.6,312.6 L695.2,370 L699.2,402 L704.3,421.5" stroke="#f5621b" stroke-width="1.5" fill="none"/><path d="M692.6,312.4 L712,316.8" stroke="#f5621b" stroke-width="1.3" fill="none"/><path d="M993.7,260.4C989.4,264.3 976.4,275.1 967.8,283.7C959.2,292.3 949.2,302.7 941.9,312.2C934.5,321.7 928.9,331.6 923.7,340.7C918.5,349.8 914.4,357.6 910.7,366.7C907.0,375.8 903.6,387.6 901.7,395.2C899.8,402.8 899.5,409.2 899.1,412.0L914.6,431.5C915.3,428.1 916.9,418.0 918.5,411.2C920.2,404.5 922.2,397.7 924.5,391.0C926.9,384.2 929.6,377.5 932.7,370.7C935.8,364.0 939.3,357.2 943.3,350.4C947.3,343.7 951.7,336.9 956.7,330.2C961.7,323.4 967.1,316.7 973.1,309.9C979.2,303.2 985.7,296.4 992.9,289.7C1000.2,282.9 1012.6,272.8 1016.5,269.4Z" fill="#6f7073"/><path d="M1016.5,269.4C1012.6,272.8 1000.2,282.9 992.9,289.7C985.7,296.4 979.2,303.2 973.1,309.9C967.1,316.7 961.7,323.4 956.7,330.2C951.7,336.9 947.3,343.7 943.3,350.4C939.3,357.2 935.8,364.0 932.7,370.7C929.6,377.5 926.9,384.2 924.5,391.0C922.2,397.7 920.2,404.5 918.5,411.2C916.9,418.0 915.3,428.1 914.6,431.5L1011.9,426.3Z" fill="#8c8d90"/><path d="M1011.9,390 L1016.5,269.4 L993.7,260.4C989.4,264.3 976.4,275.1 967.8,283.7C959.2,292.3 949.2,302.7 941.9,312.2C934.5,321.7 928.9,331.6 923.7,340.7C918.5,349.8 914.4,357.6 910.7,366.7C907.0,375.8 903.6,387.6 901.7,395.2C899.8,402.8 899.5,409.2 899.1,412.0" fill="none" stroke="#ff5c12" stroke-width="1.7" stroke-linejoin="round"/></g></svg>
</body></html>
